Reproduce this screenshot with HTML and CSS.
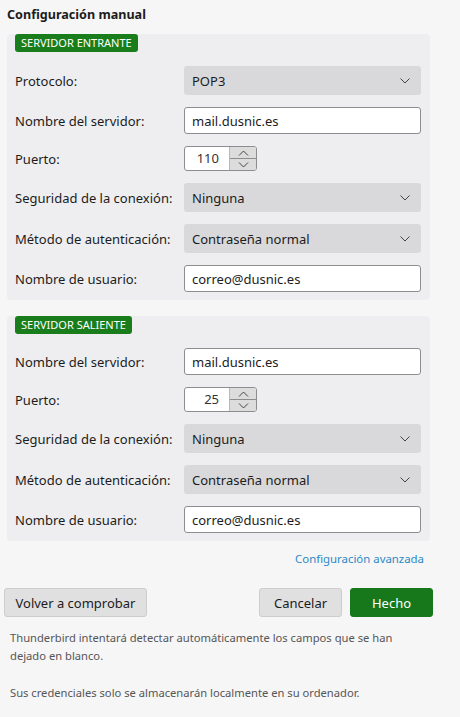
FILE: index.html
```html
<!DOCTYPE html>
<html lang="es">

<head>
  <meta charset="UTF-8">
  <meta name="viewport" content="width=device-width, initial-scale=1.0">
  <title>Configuración manual</title>
  <link rel="stylesheet" href="styles.css">
</head>

<body>
  <h1 class="title">Configuración manual</h1>

  <section class="panel">
    <span class="badge">SERVIDOR ENTRANTE</span>
    <div class="grid">
      <label>Protocolo:</label>
      <div class="select">POP3 <svg class="chev" viewBox="0 0 10 6"><path d="M0.5 0.5 L5 5 L9.5 0.5" /></svg></div>

      <label>Nombre del servidor:</label>
      <div class="input">mail.dusnic.es</div>

      <label>Puerto:</label>
      <div class="spin">
        <div class="spin-val">110</div>
        <div class="spin-btns">
          <span><svg viewBox="0 0 10 6"><path d="M0.5 5.5 L5 1 L9.5 5.5" /></svg></span>
          <span><svg viewBox="0 0 10 6"><path d="M0.5 0.5 L5 5 L9.5 0.5" /></svg></span>
        </div>
      </div>

      <label>Seguridad de la conexión:</label>
      <div class="select">Ninguna <svg class="chev" viewBox="0 0 10 6"><path d="M0.5 0.5 L5 5 L9.5 0.5" /></svg></div>

      <label>Método de autenticación:</label>
      <div class="select">Contraseña normal <svg class="chev" viewBox="0 0 10 6"><path d="M0.5 0.5 L5 5 L9.5 0.5" /></svg></div>

      <label>Nombre de usuario:</label>
      <div class="input">correo@dusnic.es</div>
    </div>
  </section>

  <section class="panel second">
    <span class="badge">SERVIDOR SALIENTE</span>
    <div class="grid">
      <label>Nombre del servidor:</label>
      <div class="input">mail.dusnic.es</div>

      <label>Puerto:</label>
      <div class="spin">
        <div class="spin-val">25</div>
        <div class="spin-btns">
          <span><svg viewBox="0 0 10 6"><path d="M0.5 5.5 L5 1 L9.5 5.5" /></svg></span>
          <span><svg viewBox="0 0 10 6"><path d="M0.5 0.5 L5 5 L9.5 0.5" /></svg></span>
        </div>
      </div>

      <label>Seguridad de la conexión:</label>
      <div class="select">Ninguna <svg class="chev" viewBox="0 0 10 6"><path d="M0.5 0.5 L5 5 L9.5 0.5" /></svg></div>

      <label>Método de autenticación:</label>
      <div class="select">Contraseña normal <svg class="chev" viewBox="0 0 10 6"><path d="M0.5 0.5 L5 5 L9.5 0.5" /></svg></div>

      <label>Nombre de usuario:</label>
      <div class="input">correo@dusnic.es</div>
    </div>
  </section>

  <div class="advanced"><a href="#">Configuración avanzada</a></div>

  <div class="actions">
    <button class="btn">Volver a comprobar</button>
    <div class="spacer"></div>
    <button class="btn">Cancelar</button>
    <button class="btn primary">Hecho</button>
  </div>

  <p class="note">Thunderbird intentará detectar automáticamente los campos que se han dejado en blanco.</p>
  <p class="note">Sus credenciales solo se almacenarán localmente en su ordenador.</p>
</body>

</html>
```

FILE: styles.css
```css
body {
  font-family: "Noto Sans", "Open Sans", sans-serif;
  font-size: 13px;
  color: #1c1c1c;
  background-color: #f6f6f7;
  margin: 0;
  padding: 0;
  width: 460px;
  height: 717px;
}

.title {
  font-size: 12.6px;
  font-weight: bold;
  margin: 0;
  padding: 5px 0 0 7px;
  line-height: 19px;
  height: 29px;
  box-sizing: border-box;
}

.panel {
  background-color: #eeeef0;
  margin: 14px 30px 0 7px;
  padding: 0 9px 8px 8px;
  border-radius: 4px;
}

.panel.second {
  margin-top: 25px;
}

.badge {
  display: block;
  width: fit-content;
  margin-top: -9px;
  background-color: #1a7d1c;
  color: white;
  font-size: 11px;
  height: 18px;
  line-height: 18px;
  padding: 0 6px;
  border-radius: 3px;
}

.grid {
  display: grid;
  grid-template-columns: 169px 1fr;
  row-gap: 12px;
  align-items: center;
  margin-top: 14px;
}

.select {
  height: 29px;
  background-color: #d9d9dc;
  border-radius: 3px;
  display: flex;
  align-items: center;
  justify-content: space-between;
  padding: 0 11px 0 8px;
  box-sizing: border-box;
}

.chev {
  width: 10px;
  height: 6px;
  fill: none;
  stroke: #444;
  stroke-width: 1;
}

.input {
  height: 27px;
  background-color: white;
  border: 1px solid #8d8d8f;
  border-radius: 3px;
  display: flex;
  align-items: center;
  padding: 0 7px;
  box-sizing: border-box;
}

.spin {
  display: flex;
  width: 73px;
  height: 25px;
  border: 1px solid #8d8d8f;
  border-radius: 3px;
  box-sizing: border-box;
  background-color: white;
  overflow: hidden;
}

.spin-val {
  width: 44px;
  text-align: right;
  padding-right: 10px;
  box-sizing: border-box;
  line-height: 23px;
  color: #333;
}

.spin-btns {
  flex: 1;
  display: flex;
  flex-direction: column;
  border-left: 1px solid #b8b8b8;
  background-color: #dcdcdc;
}

.spin-btns span {
  flex: 1;
  display: flex;
  align-items: center;
  justify-content: center;
}

.spin-btns span + span {
  border-top: 1px solid #8d8d8f;
}

.spin-btns svg {
  width: 11px;
  height: 6px;
  fill: none;
  stroke: #444;
  stroke-width: 1;
}

.advanced {
  text-align: right;
  padding: 8px 36px 0 0;
  line-height: 18px;
  height: 47px;
  box-sizing: border-box;
}

.advanced a {
  color: #2a8ac6;
  text-decoration: none;
  font-size: 11.4px;
}

.actions {
  display: flex;
  gap: 8px;
  padding: 0 27px 0 4px;
}

.spacer {
  flex: 1;
}

.btn {
  font-family: inherit;
  font-size: 13px;
  height: 29px;
  min-width: 83px;
  padding: 0 10px;
  background-color: #e0e0e0;
  border: 1px solid #cdcdcd;
  border-radius: 3px;
  color: #1c1c1c;
}

.btn:first-child {
  width: 143px;
}

.btn.primary {
  background-color: #16781a;
  border-color: #16781a;
  color: white;
}

.note {
  font-size: 11.2px;
  color: #555;
  margin: 0;
  padding: 12px 10px 0 10px;
  line-height: 18px;
  width: 400px;
}

.note + .note {
  padding-top: 19px;
}
```
